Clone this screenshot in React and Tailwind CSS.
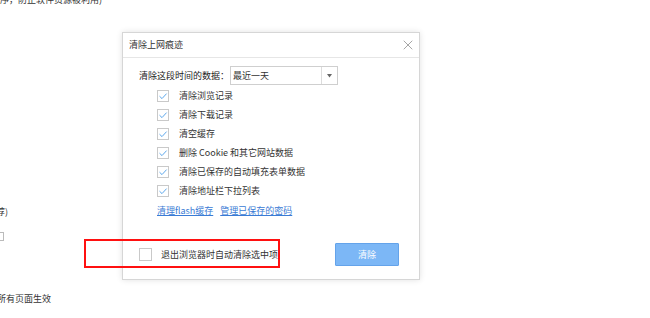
import {X} from "lucide-react";

const items = [
    "清除浏览记录",
    "清除下载记录",
    "清空缓存",
    "删除 Cookie 和其它网站数据",
    "清除已保存的自动填充表单数据",
    "清除地址栏下拉列表",
];

function Check({checked}) {
    return (
        <span className="w-[12px] h-[12px] border border-[#c9c9c9] bg-white flex items-center justify-center shrink-0">
            {checked && (
                <svg width="10" height="10" viewBox="0 0 10 10" fill="none">
                    <path d="M1.5 5.2 L4 7.6 L8.6 2.6" stroke="#5ea8ec" strokeWidth="1" />
                </svg>
            )}
        </span>
    );
}

export default function App() {
    return (
        <div
            className="relative w-[650px] h-[318px] overflow-hidden bg-white text-[#333] flex"
            style={{fontFamily: '"Noto Sans CJK SC", "Noto Sans", sans-serif'}}
        >
            {/* page behind the dialog */}
            <div className="w-[122px] shrink-0 flex flex-col text-[9px] leading-[12px]">
                <p className="-mt-[6px] whitespace-nowrap">序，防止软件资源被利用)</p>
                <p className="mt-[200px] -ml-[4px] whitespace-nowrap">荐)</p>
                <span className="mt-[14px] -ml-[8px] w-[12px] h-[9px] border border-[#bbb]" />
                <p className="mt-[52px] -ml-[3px] whitespace-nowrap">所有页面生效</p>
            </div>

            {/* dialog */}
            <div className="mt-[32px] w-[298px] h-[248px] bg-white border border-[#d6d6d6] shadow-[0_0_6px_rgba(0,0,0,0.12)] flex flex-col text-[9px]">
                <div className="h-[25px] shrink-0 border-b border-[#e6e6e6] flex items-center justify-between pl-[6px] pr-[3px]">
                    <span>清除上网痕迹</span>
                    <X className="w-[16px] h-[16px] text-[#777]" strokeWidth={1} />
                </div>

                <div className="flex flex-col pl-[16px] pt-[8px] flex-1">
                    <div className="flex items-center h-[19px]">
                        <span className="w-[91px] text-[#222]">清除这段时间的数据：</span>
                        <div className="w-[108px] h-[19px] border border-[#cfcfcf] flex items-center">
                            <span className="flex-1 pl-[2px]">最近一天</span>
                            <span className="w-[16px] h-full border-l border-[#dcdcdc] flex items-center justify-center">
                                <svg width="5" height="4" viewBox="0 0 5 4">
                                    <path d="M0 0 H5 L2.5 3.5 Z" fill="#666" />
                                </svg>
                            </span>
                        </div>
                    </div>

                    <div className="flex flex-col pl-[18px] mt-[1px]">
                        {items.map((t) => (
                            <div key={t} className="h-[19px] flex items-center gap-[10px]">
                                <Check checked />
                                <span>{t}</span>
                            </div>
                        ))}
                        <div className="flex gap-[7px] mt-[3px] h-[16px] items-center text-[#3a7bd5]">
                            <span className="underline">清理flash缓存</span>
                            <span className="underline">管理已保存的密码</span>
                        </div>
                    </div>

                    <div className="flex items-center justify-between mt-[24px] pr-[20px]">
                        <div className="flex items-center gap-[9px]">
                            <span className="w-[13px] h-[13px] border border-[#c9c9c9]" />
                            <span>退出浏览器时自动清除选中项</span>
                        </div>
                        <button className="w-[64px] h-[23px] bg-[#7cb7f6] border border-[#64a3ea] text-white text-[9px] rounded-[1px]">
                            清除
                        </button>
                    </div>
                </div>
            </div>

            {/* annotation */}
            <div className="absolute left-[84px] top-[239px] w-[196px] h-[29px] border-2 border-[#ff1010]" />
        </div>
    );
}
